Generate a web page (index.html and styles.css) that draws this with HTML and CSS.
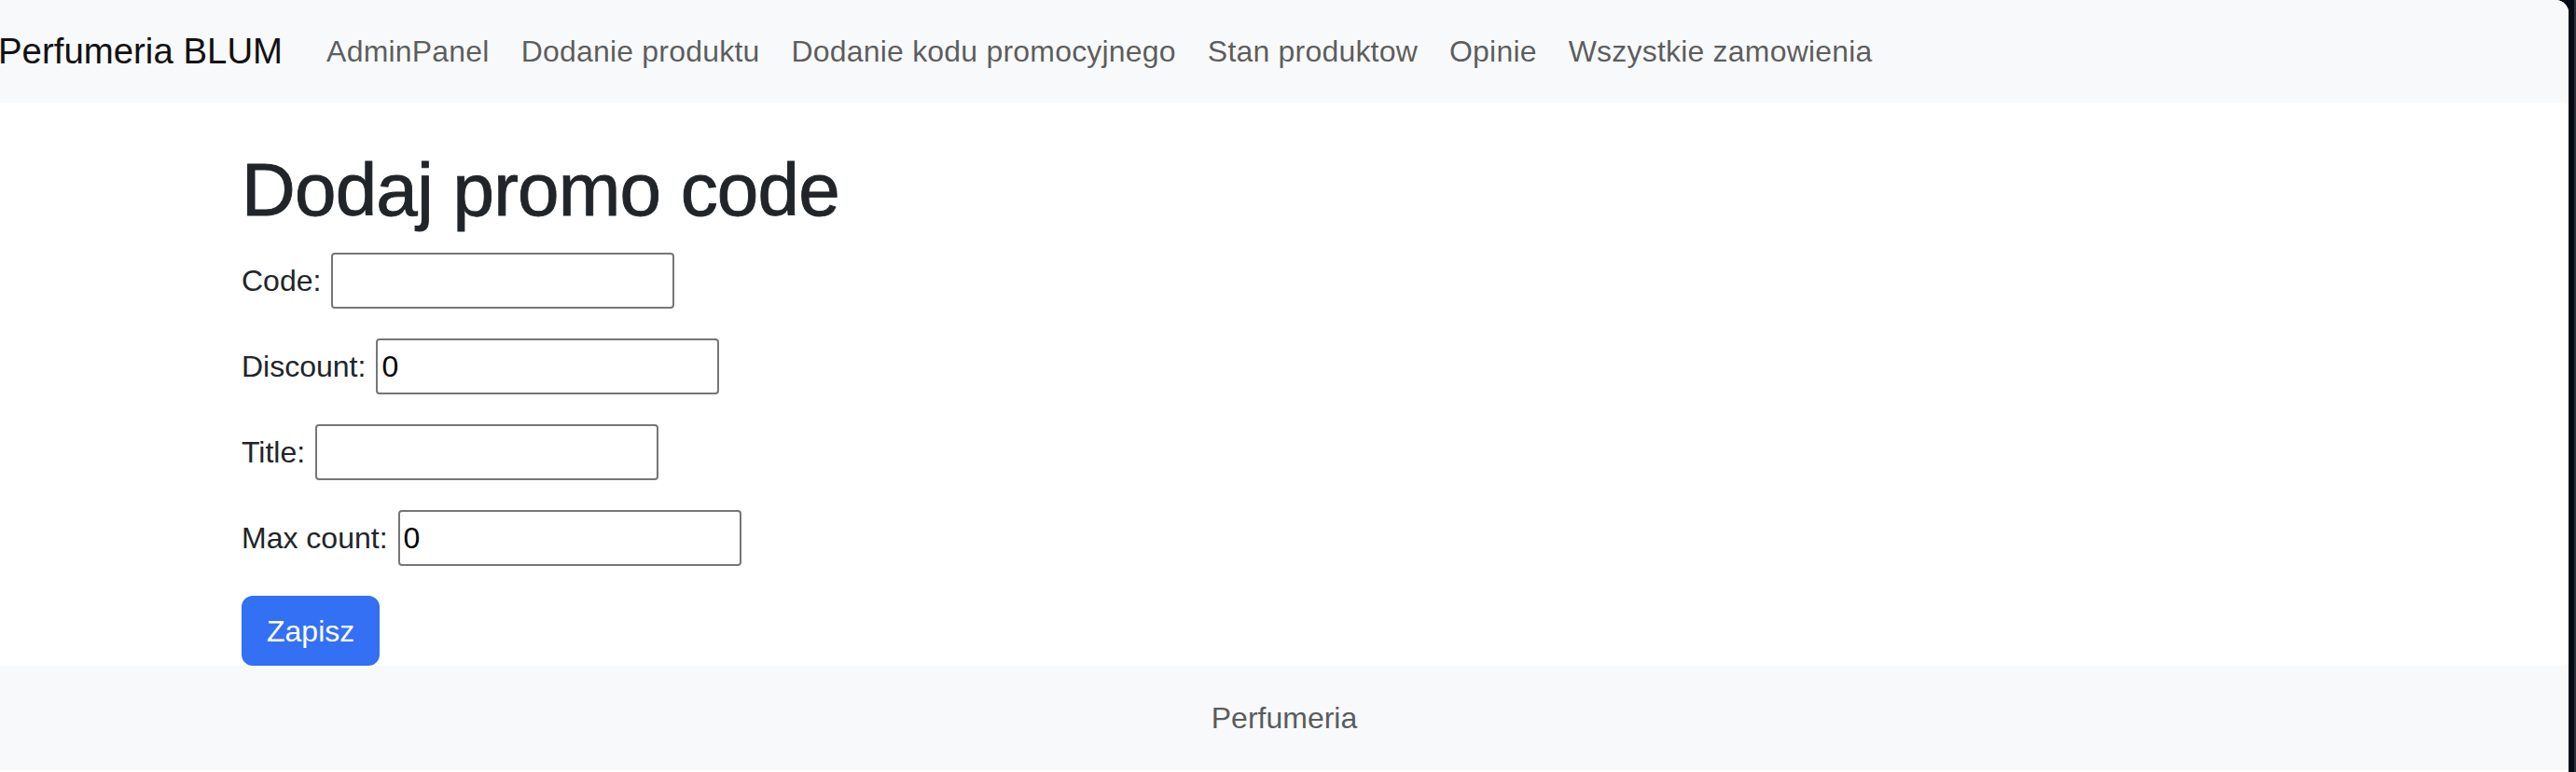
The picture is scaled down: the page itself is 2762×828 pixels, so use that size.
FILE: index.html
```html
<!DOCTYPE html>
<html lang="pl">
<head>
<meta charset="utf-8">
<title>Dodaj promo code</title>
<link rel="stylesheet" href="styles.css">
</head>
<body>
<div class="window">
  <nav class="navbar">
    <a class="brand" href="#">Perfumeria BLUM</a>
    <ul class="nav">
      <li><a class="nav-link" href="#">AdminPanel</a></li>
      <li><a class="nav-link" href="#">Dodanie produktu</a></li>
      <li><a class="nav-link" href="#">Dodanie kodu promocyjnego</a></li>
      <li><a class="nav-link" href="#">Stan produktow</a></li>
      <li><a class="nav-link" href="#">Opinie</a></li>
      <li><a class="nav-link" href="#">Wszystkie zamowienia</a></li>
    </ul>
  </nav>
  <main class="content">
    <h1 class="title">Dodaj promo code</h1>
    <form class="form">
      <div class="field"><label for="code">Code:</label><input id="code" type="text" value=""></div>
      <div class="field"><label for="discount">Discount:</label><input id="discount" type="text" value="0"></div>
      <div class="field"><label for="title">Title:</label><input id="title" type="text" value=""></div>
      <div class="field"><label for="max">Max count:</label><input id="max" type="text" value="0"></div>
      <button class="btn" type="button">Zapisz</button>
    </form>
  </main>
  <footer class="footer">Perfumeria</footer>
</div>
<div class="edge"></div>
</body>
</html>
```
FILE: styles.css
```css
html, body {
  margin: 0;
  padding: 0;
  height: 828px;
  background: #050a14;
}
body {
  display: flex;
  font-family: "Liberation Sans", Arial, sans-serif;
  font-size: 32px;
  line-height: 48px;
  color: #212529;
  overflow: hidden;
}
.window {
  width: 2754px;
  height: 828px;
  background: #ffffff;
  border-top-right-radius: 14px;
  overflow: hidden;
  display: flex;
  flex-direction: column;
}
.edge {
  width: 8px;
  height: 828px;
  background: linear-gradient(to right, #050a14 6px, #2c3038 6px);
}
.navbar {
  height: 110px;
  background: #f8f9fa;
  display: flex;
  align-items: center;
  padding-left: 0;
}
.brand {
  font-size: 38.4px;
  line-height: 56px;
  color: #111111;
  text-decoration: none;
  margin-left: -2px;
  margin-right: 30px;
  white-space: nowrap;
}
.nav {
  display: flex;
  list-style: none;
  margin: 0;
  padding: 0;
}
.nav-link {
  display: block;
  padding: 0 17px;
  color: rgba(0, 0, 0, 0.65);
  text-decoration: none;
  white-space: nowrap;
  letter-spacing: 0.2px;
}
.content {
  padding: 46px 0 0 259px;
  flex: 1;
}
.title {
  margin: 0 0 19px;
  font-size: 80px;
  line-height: 96px;
  font-weight: 500;
  color: #212529;
  letter-spacing: -0.8px;
  -webkit-text-stroke: 0.9px #212529;
}
.form {
  margin: 0;
}
.field {
  display: flex;
  align-items: center;
  height: 60px;
  margin-bottom: 32px;
}
.field label {
  margin-right: 11px;
}
.field input {
  box-sizing: border-box;
  width: 368px;
  height: 60px;
  border: 2px solid #767676;
  border-radius: 4px;
  padding: 2px 4px;
  font-family: "Liberation Sans", Arial, sans-serif;
  font-size: 32px;
  color: #000000;
  background: #ffffff;
}
.btn {
  display: block;
  box-sizing: border-box;
  height: 75px;
  padding: 0 25px;
  border: 2px solid #3470f3;
  border-radius: 12px;
  background: #3470f3;
  color: #ffffff;
  font-family: "Liberation Sans", Arial, sans-serif;
  font-size: 32px;
  line-height: 48px;
}
.footer {
  height: 112px;
  margin-bottom: 2px;
  background: #f8f9fa;
  display: flex;
  align-items: center;
  justify-content: center;
  color: #595c5f;
}
```
